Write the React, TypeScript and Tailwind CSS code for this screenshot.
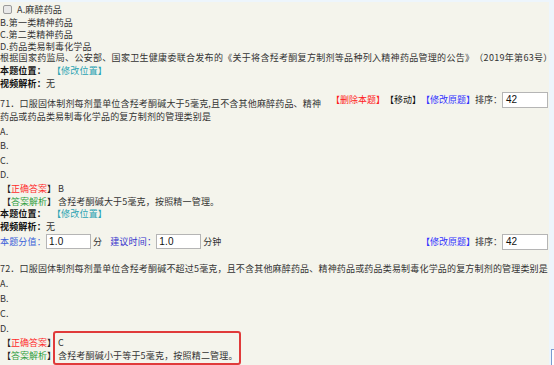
import React from "react";

function Row({ h, children, className = "" }: { h: string; children: React.ReactNode; className?: string }) {
  return <div className={`flex items-center whitespace-nowrap ${h} ${className}`}>{children}</div>;
}

function Tag({ color, children }: { color: string; children: React.ReactNode }) {
  return <span className={color}>【{children}】</span>;
}

function AnswerLabel({ color, children }: { color: string; children: React.ReactNode }) {
  return (
    <span className="inline-block w-[56px] pl-[2px] text-[#222] tracking-normal">
      【<span className={color}>{children}</span>】
    </span>
  );
}

function SortBox() {
  return (
    <div className="flex items-center tracking-normal">
      <span className="text-[#3333ff]">【修改原题】</span>
      <span className="text-[#333]">排序：</span>
      <div className="w-[46px] h-[16px] border border-[#b5b5b5] bg-white flex items-center pl-[3px] text-[10px] text-[#111] font-['Liberation_Sans',sans-serif]">
        42
      </div>
    </div>
  );
}

function TimeInput() {
  return (
    <div className="w-[45px] h-[15px] border border-[#b5b5b5] bg-white flex items-center pl-[2px] text-[10px] text-[#111] font-['Liberation_Sans',sans-serif]">
      1.0
    </div>
  );
}

export default function App() {
  return (
    <div className="w-[554px] h-[365px] overflow-hidden bg-[#edf5fc] flex text-[9px] leading-[12px] tracking-[0.18px] text-[#333] [text-spacing-trim:space-all] font-['Noto_Sans_CJK_SC','Microsoft_YaHei',sans-serif]">
      <div className="w-[549px] mt-[2px] bg-[#f4f4ec] relative shrink-0">
        {/* tail of question 70 */}
        <Row h="h-[15px]">
          <span className="ml-[3px] w-[9px] h-[9px] border border-[#9a9a9a] rounded-[2px] bg-[#e8e8e8]" />
          <span className="ml-[5px]">A.麻醉药品</span>
        </Row>
        <Row h="h-[12px]">B.第一类精神药品</Row>
        <Row h="h-[12px]">C.第二类精神药品</Row>
        <Row h="h-[11px]">D.药品类易制毒化学品</Row>
        <Row h="h-[12px]" className="tracking-[0.3px]">
          根据国家药监局、公安部、国家卫生健康委联合发布的《关于将含羟考酮复方制剂等品种列入精神药品管理的公告》（2019年第63号）
        </Row>
        <Row h="h-[13px]">
          <span className="font-bold text-[#111]">本题位置：</span>
          <span className="ml-[6px] text-[#2aa3b3]">【修改位置】</span>
        </Row>
        <Row h="h-[14px]">
          <span className="font-bold text-[#111]">视频解析：</span>
          <span>无</span>
        </Row>

        {/* question 71 */}
        <div>
          <div className="float-right mr-[1px] flex items-center h-[17px] tracking-normal">
            <Tag color="text-[#ff2020]">删除本题</Tag>
            <span className="text-[#111]">【移动】</span>
            <SortBox />
          </div>
          <p className="pt-[6px] leading-[13px]">
            71．口服固体制剂每剂量单位含羟考酮碱大于5毫克,且不含其他麻醉药品、精神
            <br />
            药品或药品类易制毒化学品的复方制剂的管理类别是
          </p>
        </div>
        <Row h="h-[15px]" className="mt-[1px]">A.</Row>
        <Row h="h-[14px]">B.</Row>
        <Row h="h-[15px]">C.</Row>
        <Row h="h-[14px]">D.</Row>
        <Row h="h-[14px]">
          <AnswerLabel color="text-[#ff2a2a]">正确答案</AnswerLabel>
          <span className="ml-[2px]">B</span>
        </Row>
        <Row h="h-[11px]">
          <AnswerLabel color="text-[#2f9e3f]">答案解析</AnswerLabel>
          <span className="ml-[2px]">含羟考酮碱大于5毫克，按照精一管理。</span>
        </Row>
        <Row h="h-[13px]">
          <span className="font-bold text-[#111]">本题位置：</span>
          <span className="ml-[6px] text-[#2aa3b3]">【修改位置】</span>
        </Row>
        <Row h="h-[13px]">
          <span className="font-bold text-[#111]">视频解析：</span>
          <span>无</span>
        </Row>
        <Row h="h-[17px]" className="justify-between pr-[1px]">
          <div className="flex items-center">
            <span className="text-[#3a5fd9] w-[46px]">本题分值：</span>
            <TimeInput />
            <span className="ml-[2px]">分</span>
            <span className="ml-[8px] text-[#3333cc] w-[46px]">建议时间：</span>
            <TimeInput />
            <span className="ml-[2px]">分钟</span>
          </div>
          <SortBox />
        </Row>

        {/* question 72 */}
        <Row h="h-[15px]" className="mt-[11px]">
          72．口服固体制剂每剂量单位含羟考酮碱不超过5毫克，且不含其他麻醉药品、精神药品或药品类易制毒化学品的复方制剂的管理类别是
        </Row>
        <Row h="h-[15px]">A.</Row>
        <Row h="h-[15px]">B.</Row>
        <Row h="h-[15px]">C.</Row>
        <Row h="h-[15px]">D.</Row>
        <div className="relative">
          <Row h="h-[14px]">
            <AnswerLabel color="text-[#ff2a2a]">正确答案</AnswerLabel>
            <span className="ml-[2px]">C</span>
          </Row>
          <Row h="h-[12px]">
            <AnswerLabel color="text-[#2f9e3f]">答案解析</AnswerLabel>
            <span className="ml-[2px]">含羟考酮碱小于等于5毫克，按照精二管理。</span>
          </Row>
          <div className="absolute left-[53px] top-[-5px] w-[188px] h-[34px] border-2 border-[#e03a3a] rounded-[3px]" />
        </div>
      </div>
      <div className="flex-1 pt-[349px] pl-[2px]">
        <div className="h-[20px] border-l border-t border-[#7b9bd0] bg-white" />
      </div>
    </div>
  );
}
